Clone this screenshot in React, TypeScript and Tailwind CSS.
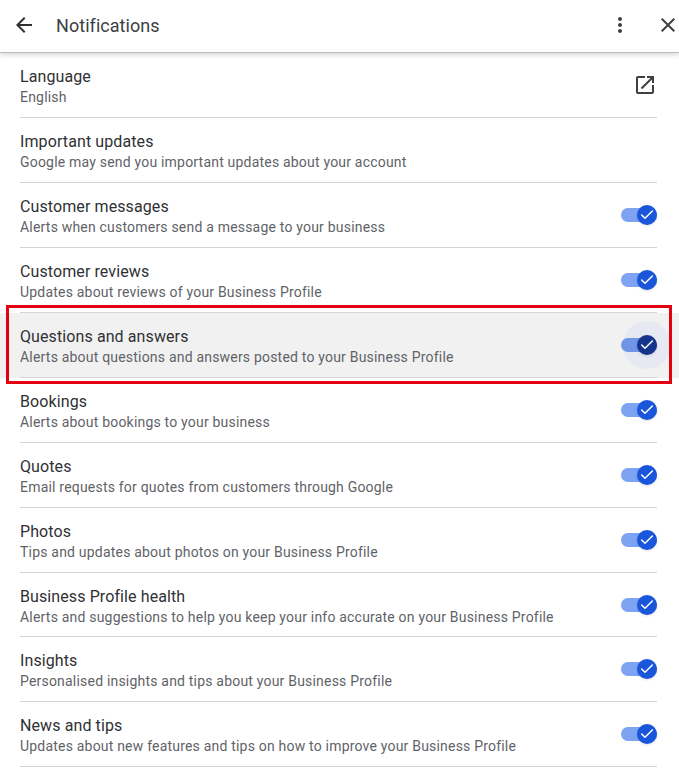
import { Check } from 'lucide-react'

const rows = [
  { title: 'Customer messages', text: 'Alerts when customers send a message to your business' },
  { title: 'Customer reviews', text: 'Updates about reviews of your Business Profile' },
  { title: 'Questions and answers', text: 'Alerts about questions and answers posted to your Business Profile', active: true },
  { title: 'Bookings', text: 'Alerts about bookings to your business' },
  { title: 'Quotes', text: 'Email requests for quotes from customers through Google' },
  { title: 'Photos', text: 'Tips and updates about photos on your Business Profile' },
  { title: 'Business Profile health', text: 'Alerts and suggestions to help you keep your info accurate on your Business Profile', short: true },
  { title: 'Insights', text: 'Personalised insights and tips about your Business Profile' },
  { title: 'News and tips', text: 'Updates about new features and tips on how to improve your Business Profile' },
]

function Toggle({ active }: { active?: boolean }) {
  return (
    <div className="relative h-[14px] w-[36px]">
      {active && <div className="absolute top-[-17px] left-[2px] h-[48px] w-[48px] rounded-full bg-[#e6e9f2]" />}
      <div className={active ? 'absolute inset-0 rounded-full bg-[#6f95e6]' : 'absolute inset-0 rounded-full bg-[#7da3f2]'} />
      <div
        className={
          active
            ? 'absolute top-[-3px] right-0 flex h-[20px] w-[20px] items-center justify-center rounded-full bg-[#17348c] text-white shadow'
            : 'absolute top-[-3px] right-0 flex h-[20px] w-[20px] items-center justify-center rounded-full bg-[#1a56db] text-white shadow'
        }
      >
        <Check size={16} strokeWidth={2.2} />
      </div>
    </div>
  )
}

function Row({ title, text, active, short, children }: { title: string; text: string; active?: boolean; short?: boolean; children?: React.ReactNode }) {
  return (
    <div className={active ? 'bg-[#f1f1f1] pl-[20px] pr-[22px]' : 'pl-[20px] pr-[22px]'}>
      <div className={short ? 'flex h-[64px] items-center justify-between border-b border-[#d4d4d4]' : 'flex h-[65px] items-center justify-between border-b border-[#d4d4d4]'}>
        <div className="pt-[4px]">
          <div className="text-[16px] leading-[20px] tracking-[0.1px] text-[#303134]">{title}</div>
          <div className="text-[14px] leading-[20px] tracking-[0.2px] text-[#5f6368]">{text}</div>
        </div>
        {children}
      </div>
    </div>
  )
}

export default function App() {
  return (
    <div className="relative h-[768px] w-[679px] overflow-hidden bg-white font-['Roboto',sans-serif]">
      <header className="relative z-10 flex h-[53px] items-center border-b border-[#bdbdbd] pb-[2px] pl-[12px] shadow-[0_2px_5px_rgba(0,0,0,0.16)]">
        <svg viewBox="0 0 24 24" width="24" height="24" fill="#2f3033" className="shrink-0">
          <path d="M20 11H7.83l5.59-5.59L12 4l-8 8 8 8 1.41-1.41L7.83 13H20v-2z" />
        </svg>
        <h1 className="ml-[20px] flex-1 text-[18px] tracking-[0.05px] text-[#3c4043]">Notifications</h1>
        <svg viewBox="0 0 24 24" width="24" height="24" fill="#3c4043" className="shrink-0">
          <path d="M12 8c1.1 0 2-.9 2-2s-.9-2-2-2-2 .9-2 2 .9 2 2 2zm0 2c-1.1 0-2 .9-2 2s.9 2 2 2 2-.9 2-2-.9-2-2-2zm0 6c-1.1 0-2 .9-2 2s.9 2 2 2 2-.9 2-2-.9-2-2-2z" />
        </svg>
        <svg viewBox="0 0 24 24" width="24" height="24" fill="#3c4043" className="mr-[-1px] ml-[24px] shrink-0">
          <path d="M19 6.41 17.59 5 12 10.59 6.41 5 5 6.41 10.59 12 5 17.59 6.41 19 12 13.41 17.59 19 19 17.59 13.41 12z" />
        </svg>
      </header>
      <Row title="Language" text="English">
        <svg viewBox="0 0 24 24" width="24" height="24" fill="#3c4043" className="shrink-0">
          <path d="M19 19H5V5h7V3H5c-1.11 0-2 .9-2 2v14c0 1.1.89 2 2 2h14c1.1 0 2-.9 2-2v-7h-2v7zM14 3v2h3.59l-9.83 9.83 1.41 1.41L19 6.41V10h2V3h-7z" />
        </svg>
      </Row>
      <Row title="Important updates" text="Google may send you important updates about your account" />
      {rows.map((r) => (
        <Row key={r.title} title={r.title} text={r.text} active={r.active} short={r.short}>
          <Toggle active={r.active} />
        </Row>
      ))}
      <div className="pointer-events-none absolute top-[305px] left-[6px] h-[79px] w-[666px] border-[3px] border-[#e3000f]" />
    </div>
  )
}
